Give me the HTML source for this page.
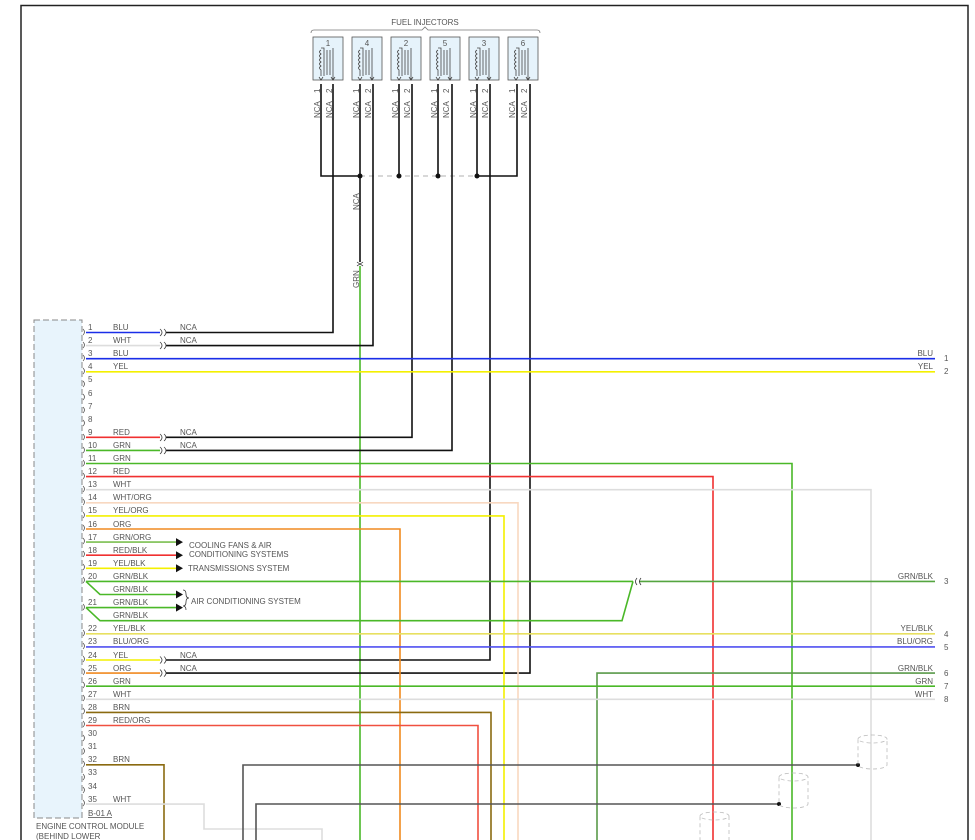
<!DOCTYPE html>
<html><head><meta charset="utf-8"><style>
html,body{margin:0;padding:0;background:#fff;}
svg{display:block;font-family:"Liberation Sans",sans-serif;}
text{font-size:8px;fill:#555;}
</style></head><body>
<svg width="975" height="840" viewBox="0 0 975 840" xmlns="http://www.w3.org/2000/svg">
<!-- frame -->
<path d="M21 840 V5.5 H968 V840" fill="none" stroke="#222" stroke-width="1.5"/>

<!-- injectors -->
<text x="425" y="25" text-anchor="middle">FUEL INJECTORS</text>
<path d="M311 33 q0 -3 3 -3 H422 l3 -3 l3 3 H537 q3 0 3 3" fill="none" stroke="#777" stroke-width="0.8"/>
<g fill="#e6f3fb" stroke="#555" stroke-width="0.8">
<rect x="313" y="37" width="30" height="43"/><rect x="352" y="37" width="30" height="43"/><rect x="391" y="37" width="30" height="43"/>
<rect x="430" y="37" width="30" height="43"/><rect x="469" y="37" width="30" height="43"/><rect x="508" y="37" width="30" height="43"/>
</g>
<g font-size="8"><text x="328" y="46" text-anchor="middle">1</text><text x="367" y="46" text-anchor="middle">4</text><text x="406" y="46" text-anchor="middle">2</text><text x="445" y="46" text-anchor="middle">5</text><text x="484" y="46" text-anchor="middle">3</text><text x="523" y="46" text-anchor="middle">6</text></g>
<g fill="none" stroke="#444" stroke-width="0.8">
<!-- coil + bars per injector -->
<g id="inj"><path d="M321 48 h3 v28 M321 50 q-3 2 0 4 q-3 2 0 4 q-3 2 0 4 q-3 2 0 4 q-3 2 0 4 v6 M327 50 v25 M330 50 v25 M333 48 v32 M319 77 l2 3 l2 -3 M331 77 l2 3 l2 -3"/></g>
<use href="#inj" x="39"/><use href="#inj" x="78"/><use href="#inj" x="117"/><use href="#inj" x="156"/><use href="#inj" x="195"/>
</g>
<g>
<text transform="translate(320,118) rotate(-90)">NCA</text><text transform="translate(332,118) rotate(-90)">NCA</text>
<text transform="translate(359,118) rotate(-90)">NCA</text><text transform="translate(371,118) rotate(-90)">NCA</text>
<text transform="translate(398,118) rotate(-90)">NCA</text><text transform="translate(410,118) rotate(-90)">NCA</text>
<text transform="translate(437,118) rotate(-90)">NCA</text><text transform="translate(449,118) rotate(-90)">NCA</text>
<text transform="translate(476,118) rotate(-90)">NCA</text><text transform="translate(488,118) rotate(-90)">NCA</text>
<text transform="translate(515,118) rotate(-90)">NCA</text><text transform="translate(527,118) rotate(-90)">NCA</text>
<text transform="translate(320,93) rotate(-90)">1</text><text transform="translate(332,93) rotate(-90)">2</text>
<text transform="translate(359,93) rotate(-90)">1</text><text transform="translate(371,93) rotate(-90)">2</text>
<text transform="translate(398,93) rotate(-90)">1</text><text transform="translate(410,93) rotate(-90)">2</text>
<text transform="translate(437,93) rotate(-90)">1</text><text transform="translate(449,93) rotate(-90)">2</text>
<text transform="translate(476,93) rotate(-90)">1</text><text transform="translate(488,93) rotate(-90)">2</text>
<text transform="translate(515,93) rotate(-90)">1</text><text transform="translate(527,93) rotate(-90)">2</text>
<text transform="translate(359,210) rotate(-90)">NCA</text>
<text transform="translate(359,288) rotate(-90)">GRN</text>
</g>
<!-- injector pin1 bus -->
<g fill="none" stroke="#111" stroke-width="1.6">
<path d="M321 84 V176 H360 M360 84 V176 V262 M399 84 V176 M438 84 V176 M477 84 V176 M517 84 V176 H477"/>
</g>
<path d="M360 176 H477" stroke="#999" stroke-width="0.8" stroke-dasharray="5,4"/>
<g fill="#111"><circle cx="360" cy="176" r="2.5"/><circle cx="399" cy="176" r="2.5"/><circle cx="438" cy="176" r="2.5"/><circle cx="477" cy="176" r="2.5"/></g>
<path d="M357 262 q3 3 6 0 M357 266 q3 -3 6 0" fill="none" stroke="#333" stroke-width="0.8"/>

<!-- ECM -->
<rect x="34" y="320" width="48" height="498" fill="#e8f4fc" stroke="#888" stroke-width="1" stroke-dasharray="6,3"/>
<text x="88" y="816" text-decoration="underline">B-01 A</text>
<text x="36" y="829">ENGINE CONTROL MODULE</text>
<text x="36" y="839">(BEHIND LOWER</text>

<!-- vertical long wires -->
<g fill="none" stroke-width="1.6">
<path d="M360 266 V840" stroke="#4ab828"/>
<path d="M333 84 V332.5 H166" stroke="#111"/>
<path d="M373 84 V345.6 H166" stroke="#111"/>
<path d="M412 84 V437.3 H166" stroke="#111"/>
<path d="M452 84 V450.4 H166" stroke="#111"/>
<path d="M490 84 V660 H166" stroke="#111"/>
<path d="M530 84 V673.1 H166" stroke="#111"/>
</g>

<!-- ECM pin wires -->
<g fill="none" stroke-width="1.6">
<path d="M86 332.5 H160" stroke="#1a2ee8"/>
<path d="M86 345.6 H160" stroke="#ddd"/>
<path d="M86 358.7 H935" stroke="#1a2ee8"/>
<path d="M86 371.8 H935" stroke="#f4f000"/>
<path d="M86 437.3 H160" stroke="#f03030"/>
<path d="M86 450.4 H160" stroke="#4ab828"/>
<path d="M86 463.5 H792 V840" stroke="#4ab828"/>
<path d="M86 476.6 H713 V840" stroke="#f03030"/>
<path d="M86 489.7 H871 V840" stroke="#ddd"/>
<path d="M86 502.8 H518 V840" stroke="#f8d8c0"/>
<path d="M86 515.9 H504 V840" stroke="#f4f000"/>
<path d="M86 529 H400 V840" stroke="#f08a20"/>
<path d="M86 542.1 H176" stroke="#7cbf50"/>
<path d="M86 555.2 H176" stroke="#f03030"/>
<path d="M86 568.3 H176" stroke="#f4f000"/>
<path d="M86 581.4 H633" stroke="#4ab828"/>
<path d="M639 581.4 H935" stroke="#55a540"/>
<path d="M86 581.4 L100 594.5 H176" stroke="#4ab828"/>
<path d="M86 607.6 H176" stroke="#4ab828"/>
<path d="M86 607.6 L100 620.7 H622 L633 581.4" stroke="#4ab828"/>
<path d="M86 633.8 H935" stroke="#e8e060"/>
<path d="M86 646.9 H935" stroke="#5050f0"/>
<path d="M86 660 H160" stroke="#f4f000"/>
<path d="M86 673.1 H160" stroke="#f08a20"/>
<path d="M597 840 V673.1 H935" stroke="#5a9a4a"/>
<path d="M86 686.2 H935" stroke="#4ab828"/>
<path d="M86 699.3 H935" stroke="#ddd"/>
<path d="M86 712.4 H491 V840" stroke="#8a6a10"/>
<path d="M86 725.5 H478 V840" stroke="#f05040"/>
<path d="M86 764.8 H164 V840" stroke="#8a6a10"/>
<path d="M86 804.1 H204 V829 H322 V840" stroke="#ddd"/>
<path d="M243 840 V765 H858" stroke="#555"/>
<path d="M256 840 V804 H779" stroke="#555"/>
</g>
<g fill="#111"><circle cx="858" cy="765" r="2"/><circle cx="779" cy="804" r="2"/></g>
<!-- cylinders -->
<g fill="none" stroke="#bbb" stroke-width="0.8" stroke-dasharray="4,3">
<path d="M858 739 a14.5 4 0 0 1 29 0 a14.5 4 0 0 1 -29 0 V765 a14.5 4 0 0 0 29 0 V739"/>
<path d="M779 777 a14.5 4 0 0 1 29 0 a14.5 4 0 0 1 -29 0 V804 a14.5 4 0 0 0 29 0 V777"/>
<path d="M700 816 a14.5 4 0 0 1 29 0 a14.5 4 0 0 1 -29 0 V840 M729 816 V840"/>
</g>
<!-- connector brackets -->
<g fill="none" stroke="#333" stroke-width="0.8">
<path d="M160 329 q4 3.5 0 7 M164 329 q4 3.5 0 7 M160 342 q4 3.5 0 7 M164 342 q4 3.5 0 7 M160 434 q4 3.5 0 7 M164 434 q4 3.5 0 7 M160 447 q4 3.5 0 7 M164 447 q4 3.5 0 7 M160 656.5 q4 3.5 0 7 M164 656.5 q4 3.5 0 7 M160 669.6 q4 3.5 0 7 M164 669.6 q4 3.5 0 7"/>
<path d="M637 578 q-3 3.5 0 7 M641 578 q-3 3.5 0 7"/>
<path d="M183 590 q3 0 3 4 q0 4 3 4 q-3 0 -3 4 q0 4 -3 4 q3 0 3 4 v0"/>
</g>
<!-- pin brackets on ECM -->
<g fill="none" stroke="#555" stroke-width="0.8">
<path d="M83 329 q3 3 0 6 M83 342 q3 3 0 6 M83 355 q3 3 0 6 M83 368 q3 3 0 6 M83 381 q3 3 0 6 M83 394 q3 3 0 6 M83 407 q3 3 0 6 M83 420 q3 3 0 6 M83 434 q3 3 0 6 M83 447 q3 3 0 6 M83 460 q3 3 0 6 M83 473 q3 3 0 6 M83 486 q3 3 0 6 M83 499 q3 3 0 6 M83 512 q3 3 0 6 M83 525 q3 3 0 6 M83 538 q3 3 0 6 M83 551 q3 3 0 6 M83 564 q3 3 0 6 M83 577 q3 3 0 6 M83 604 q3 3 0 6 M83 630 q3 3 0 6 M83 643 q3 3 0 6 M83 656 q3 3 0 6 M83 669 q3 3 0 6 M83 682 q3 3 0 6 M83 695 q3 3 0 6 M83 708 q3 3 0 6 M83 721 q3 3 0 6 M83 735 q3 3 0 6 M83 748 q3 3 0 6 M83 761 q3 3 0 6 M83 774 q3 3 0 6 M83 787 q3 3 0 6 M83 800 q3 3 0 6"/>
</g>
<!-- arrows -->
<g fill="#111">
<path d="M176 538.1 l7 4 l-7 4z"/><path d="M176 551.2 l7 4 l-7 4z"/><path d="M176 564.3 l7 4 l-7 4z"/>
<path d="M176 590.5 l7 4 l-7 4z"/><path d="M176 603.6 l7 4 l-7 4z"/>
</g>
<text x="189" y="548">COOLING FANS &amp; AIR</text>
<text x="189" y="557">CONDITIONING SYSTEMS</text>
<text x="188" y="571">TRANSMISSIONS SYSTEM</text>
<text x="191" y="604">AIR CONDITIONING SYSTEM</text>

<!-- pin numbers & labels -->
<g>
<text x="88" y="330">1</text><text x="113" y="330">BLU</text><text x="180" y="330">NCA</text>
<text x="88" y="343">2</text><text x="113" y="343">WHT</text><text x="180" y="343">NCA</text>
<text x="88" y="356">3</text><text x="113" y="356">BLU</text>
<text x="88" y="369">4</text><text x="113" y="369">YEL</text>
<text x="88" y="382">5</text><text x="88" y="396">6</text><text x="88" y="409">7</text><text x="88" y="422">8</text>
<text x="88" y="435">9</text><text x="113" y="435">RED</text><text x="180" y="435">NCA</text>
<text x="88" y="448">10</text><text x="113" y="448">GRN</text><text x="180" y="448">NCA</text>
<text x="88" y="461">11</text><text x="113" y="461">GRN</text>
<text x="88" y="474">12</text><text x="113" y="474">RED</text>
<text x="88" y="487">13</text><text x="113" y="487">WHT</text>
<text x="88" y="500">14</text><text x="113" y="500">WHT/ORG</text>
<text x="88" y="513">15</text><text x="113" y="513">YEL/ORG</text>
<text x="88" y="527">16</text><text x="113" y="527">ORG</text>
<text x="88" y="540">17</text><text x="113" y="540">GRN/ORG</text>
<text x="88" y="553">18</text><text x="113" y="553">RED/BLK</text>
<text x="88" y="566">19</text><text x="113" y="566">YEL/BLK</text>
<text x="88" y="579">20</text><text x="113" y="579">GRN/BLK</text>
<text x="113" y="592">GRN/BLK</text>
<text x="88" y="605">21</text><text x="113" y="605">GRN/BLK</text>
<text x="113" y="618">GRN/BLK</text>
<text x="88" y="631">22</text><text x="113" y="631">YEL/BLK</text>
<text x="88" y="644">23</text><text x="113" y="644">BLU/ORG</text>
<text x="88" y="658">24</text><text x="113" y="658">YEL</text><text x="180" y="658">NCA</text>
<text x="88" y="671">25</text><text x="113" y="671">ORG</text><text x="180" y="671">NCA</text>
<text x="88" y="684">26</text><text x="113" y="684">GRN</text>
<text x="88" y="697">27</text><text x="113" y="697">WHT</text>
<text x="88" y="710">28</text><text x="113" y="710">BRN</text>
<text x="88" y="723">29</text><text x="113" y="723">RED/ORG</text>
<text x="88" y="736">30</text><text x="88" y="749">31</text>
<text x="88" y="762">32</text><text x="113" y="762">BRN</text>
<text x="88" y="775">33</text><text x="88" y="789">34</text>
<text x="88" y="802">35</text><text x="113" y="802">WHT</text>
</g>
<!-- right labels -->
<g text-anchor="end">
<text x="933" y="356">BLU</text><text x="933" y="369">YEL</text>
<text x="933" y="579">GRN/BLK</text>
<text x="933" y="631">YEL/BLK</text><text x="933" y="644">BLU/ORG</text>
<text x="933" y="671">GRN/BLK</text><text x="933" y="684">GRN</text><text x="933" y="697">WHT</text>
</g>
<g>
<text x="944" y="361">1</text><text x="944" y="374">2</text><text x="944" y="584">3</text>
<text x="944" y="637">4</text><text x="944" y="650">5</text><text x="944" y="676">6</text><text x="944" y="689">7</text><text x="944" y="702">8</text>
</g>
</svg>
</body></html>
